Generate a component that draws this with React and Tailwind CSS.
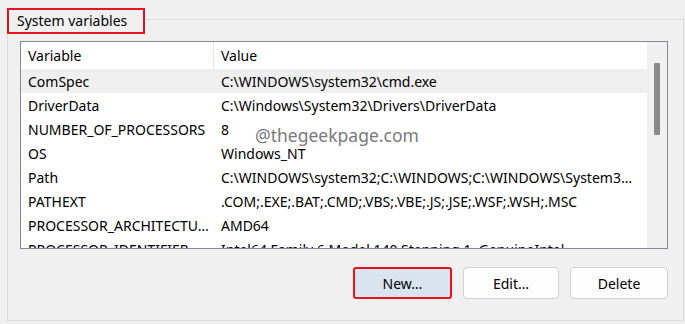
import React from "react";

const rows = [
  ["ComSpec", "C:\\WINDOWS\\system32\\cmd.exe", true],
  ["DriverData", "C:\\Windows\\System32\\Drivers\\DriverData"],
  ["NUMBER_OF_PROCESSORS", "8"],
  ["OS", "Windows_NT"],
  ["Path", "C:\\WINDOWS\\system32;C:\\WINDOWS;C:\\WINDOWS\\System3…"],
  ["PATHEXT", ".COM;.EXE;.BAT;.CMD;.VBS;.VBE;.JS;.JSE;.WSF;.WSH;.MSC"],
  ["PROCESSOR_ARCHITECTU…", "AMD64"],
  ["PROCESSOR_IDENTIFIER", "Intel64 Family 6 Model 140 Stepping 1, GenuineIntel"],
];

export default function App() {
  return (
    <div
      className="w-[685px] h-[324px] bg-[#f0f0f0] overflow-hidden text-black"
      style={{ fontFamily: '"Noto Sans", "Open Sans", sans-serif' }}
    >
      <div className="relative ml-[7px] mt-[19px] w-[677px] h-[302px] border border-[#dcdcdc] flex flex-col">
        {/* legend */}
        <div className="absolute left-[-1px] top-[-12px] h-[26px] w-[138px] border-2 border-[#e8141b] bg-[#f0f0f0] pl-[8px] text-[14px] leading-[22px]">
          System variables
        </div>

        {/* list */}
        <div className="ml-[12px] mt-[21px] w-[648px] h-[208px] border border-[#828790] bg-white flex overflow-hidden">
          <div className="flex-1 flex flex-col overflow-hidden text-[14px]">
            <div className="flex h-[27px] shrink-0 items-center">
              <div className="w-[193px] pl-[7px] border-r border-[#e5e5e5] h-full flex items-center">Variable</div>
              <div className="pl-[7px]">Value</div>
            </div>
            {rows.map(([k, v, sel]) => (
              <div
                key={k}
                className={`flex h-[24px] shrink-0 items-center whitespace-nowrap ${sel ? "bg-[#efefef]" : ""}`}
              >
                <div className="w-[193px] pl-[7px]">{k}</div>
                <div className="pl-[7px]">{v}</div>
              </div>
            ))}
          </div>
          <div className="w-[20px] shrink-0 bg-[#f0f0f0] flex justify-center pt-[21px]">
            <div className="w-[6px] h-[72px] bg-[#8a8a8a] rounded-[1px]" />
          </div>
        </div>

        {/* buttons */}
        <div className="mt-[18px] flex justify-end gap-[11px] pr-[15px] text-[14px]">
          <button className="w-[99px] h-[32px] rounded-[3px] border-2 border-[#e8141b] bg-[#d9e4f0]">New…</button>
          <button className="w-[96px] h-[32px] rounded-[4px] border border-[#d0d0d0] bg-[#fdfdfd]">Edit…</button>
          <button className="w-[98px] h-[32px] rounded-[4px] border border-[#d0d0d0] bg-[#fdfdfd]">Delete</button>
        </div>

        {/* watermark */}
        <div
          className="absolute left-[247px] top-[107px] text-[17.5px] text-[#7a7a7a] leading-none"
          style={{ fontFamily: '"Noto Sans", sans-serif' }}
        >
          @thegeekpage.com
        </div>
      </div>
    </div>
  );
}
